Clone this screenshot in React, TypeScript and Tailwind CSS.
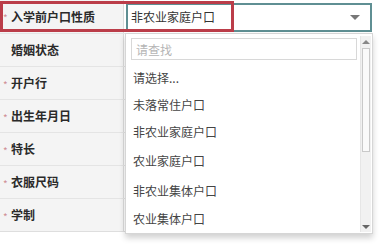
import { useState } from 'react';

// Form rows on the left, first one is the open select
const rows = [
  { label: '入学前户口性质', required: true },
  { label: '婚姻状态', required: false },
  { label: '开户行', required: true },
  { label: '出生年月日', required: true },
  { label: '特长', required: true },
  { label: '衣服尺码', required: true },
  { label: '学制', required: true },
];

const options = [
  { text: '请选择...', h: 'h-[27px]' },
  { text: '未落常住户口', h: 'h-[27px]' },
  { text: '非农业家庭户口', h: 'h-[27px]' },
  { text: '农业家庭户口', h: 'h-[31px]' },
  { text: '非农业集体户口', h: 'h-[29px]' },
  { text: '农业集体户口', h: 'h-[27px]' },
];

export default function App() {
  const [query, setQuery] = useState('');

  return (
    <div
      className="relative w-[379px] h-[250px] overflow-hidden bg-white text-[12px]"
      style={{ fontFamily: '"Noto Sans CJK SC", "Noto Sans", sans-serif' }}
    >
      {/* form table */}
      <div className="w-[372px] border-b border-[#dedede]">
        {rows.map((r, i) => (
          <div key={r.label} className="flex h-[33px] border-t border-[#e4e4e4] first:border-t-0">
            <div className="w-[124px] flex items-center bg-[#f4f4f4] border-r border-[#dcdcdc]">
              <span className="w-[11px] pl-[3px] pt-[3px] text-[#cf8f94] text-[10px] leading-none">{r.required ? '*' : ''}</span>
              <span className="font-bold text-[#2a2a2a]">{r.label}</span>
            </div>
            <div className="flex-1 flex items-center pl-[2px]">
              {i === 0 && (
                <div className="flex-1 h-[29px] mt-[1px] border-2 border-[#5f8f93] flex items-center pl-[3px] pr-[10px]">
                  <span className="flex-1 text-[#333]">非农业家庭户口</span>
                  <span className="w-0 h-0 border-l-[5px] border-r-[5px] border-t-[5px] border-l-transparent border-r-transparent border-t-[#777]" />
                </div>
              )}
            </div>
          </div>
        ))}
      </div>

      {/* red annotation frame */}
      <div className="absolute left-0 top-[1px] w-[234px] h-[31px] border-[3px] border-[#bb3d49] pointer-events-none" />

      {/* open dropdown */}
      <div className="absolute left-[125px] top-[33px] w-[248px] h-[201px] bg-white border border-[#d6d6d6] shadow-[0_4px_6px_rgba(0,0,0,0.18)] flex">
        <div className="flex-1 flex flex-col pl-[5px] pt-[4px]">
          <input
            value={query}
            onChange={(e) => setQuery(e.target.value)}
            placeholder="请查找"
            className="w-[226px] h-[22px] border border-[#d8d8d8] px-[4px] text-[12px] text-[#333] placeholder:text-[#b5b5b5] outline-none"
          />
          <div className="mt-[4px] flex flex-col">
            {options.map((o) => (
              <div key={o.text} className={`${o.h} flex items-center pl-[2px] text-[#444]`}>
                {o.text}
              </div>
            ))}
          </div>
        </div>
        {/* scrollbar */}
        <div className="w-[11px] mr-[1px] mt-[2px] mb-[1px] flex flex-col items-center bg-[#f1f1f1] border-l border-[#e6e6e6]">
          <span className="mt-[4px] w-0 h-0 border-l-[4px] border-r-[4px] border-b-[4px] border-l-transparent border-r-transparent border-b-[#888]" />
          <div className="mt-[4px] w-[8px] h-[104px] bg-[#fafafa] border border-[#c9c9c9]" />
          <div className="flex-1" />
          <span className="mb-[3px] w-0 h-0 border-l-[4px] border-r-[4px] border-t-[4px] border-l-transparent border-r-transparent border-t-[#666]" />
        </div>
      </div>
    </div>
  );
}
